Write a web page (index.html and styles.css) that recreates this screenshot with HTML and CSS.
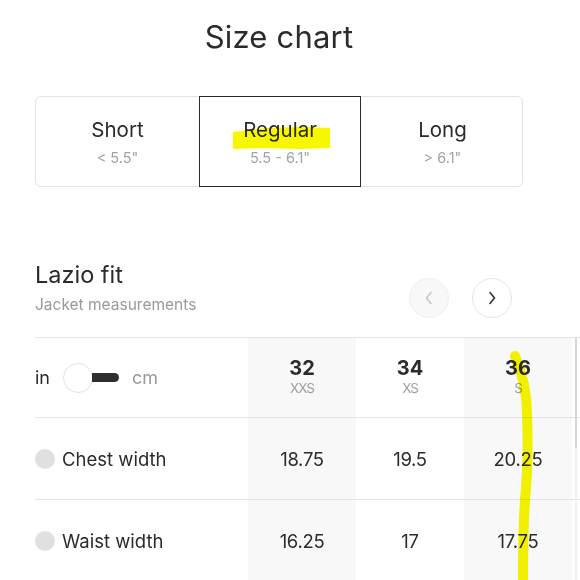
FILE: index.html
```html
<!DOCTYPE html>
<html>
<head>
<meta charset="utf-8">
<link rel="stylesheet" href="styles.css">
</head>
<body>
<main class="page">
  <h1 class="title">Size chart</h1>

  <div class="segments">
    <button class="segment"><span class="seg-label">Short</span><span class="seg-sub">&lt; 5.5"</span></button>
    <button class="segment is-active"><span class="seg-label">Regular</span><span class="seg-sub">5.5 - 6.1"</span></button>
    <button class="segment"><span class="seg-label">Long</span><span class="seg-sub">&gt; 6.1"</span></button>
  </div>

  <section class="fit-head">
    <div class="fit-text">
      <h2 class="fit-title">Lazio fit</h2>
      <p class="fit-sub">Jacket measurements</p>
    </div>
    <div class="nav">
      <button class="nav-btn is-disabled" aria-label="Previous">
        <svg width="10" height="14" viewBox="0 0 10 14"><polyline points="7,1.5 2.5,7 7,12.5" fill="none" stroke="currentColor" stroke-width="1.6" stroke-linecap="round" stroke-linejoin="round"/></svg>
      </button>
      <button class="nav-btn" aria-label="Next">
        <svg width="10" height="14" viewBox="0 0 10 14"><polyline points="3,1.5 7.5,7 3,12.5" fill="none" stroke="currentColor" stroke-width="1.6" stroke-linecap="round" stroke-linejoin="round"/></svg>
      </button>
    </div>
  </section>

  <div class="table-wrap">
    <div class="table">
      <div class="row head-row">
        <div class="cell label-cell">
          <span class="unit on">in</span>
          <span class="toggle"><span class="knob"></span><span class="bar"></span></span>
          <span class="unit off">cm</span>
        </div>
        <div class="cell size shade"><span class="size-num">32</span><span class="size-code">XXS</span></div>
        <div class="cell size"><span class="size-num">34</span><span class="size-code">XS</span></div>
        <div class="cell size shade"><span class="size-num">36</span><span class="size-code">S</span></div>
        <div class="cell size"></div>
      </div>
      <div class="row">
        <div class="cell label-cell"><span class="dot"></span><span class="measure">Chest width</span></div>
        <div class="cell val shade">18.75</div>
        <div class="cell val">19.5</div>
        <div class="cell val shade">20.25</div>
        <div class="cell val"></div>
      </div>
      <div class="row">
        <div class="cell label-cell"><span class="dot"></span><span class="measure">Waist width</span></div>
        <div class="cell val shade">16.25</div>
        <div class="cell val">17</div>
        <div class="cell val shade">17.75</div>
        <div class="cell val"></div>
      </div>
    </div>
    <div class="scrollbar"><span class="thumb"></span></div>
  </div>

  <svg class="annot" width="580" height="580" viewBox="0 0 580 580">
    <path d="M233,132 L268,128 L300,127 L330,128 L330,148 L300,149 L265,148 L233,149 Z" fill="#f7f700"/>
    <path d="M515,356 C522,372 527,392 527,415 C528,440 528,470 525,500 C523,530 523,555 523,585" fill="none" stroke="#f7f700" stroke-width="10" stroke-linecap="round"/>
  </svg>
</main>
</body>
</html>
```

FILE: styles.css
```css
* { box-sizing: border-box; }
html, body { margin: 0; padding: 0; background: #fff; }
body {
  font-family: Inter, "Liberation Sans", Arial, sans-serif;
  color: #2b2b2b;
  width: 580px;
  height: 580px;
  overflow: hidden;
}
.page {
  position: relative;
  padding: 17px 0 0 35px;
}
.title {
  margin: 0;
  width: 488px;
  text-align: center;
  font-size: 31px;
  font-weight: 400;
  line-height: 40px;
  color: #2b2b2b;
  letter-spacing: 0.2px;
}
.segments {
  margin-top: 39px;
  width: 488px;
  height: 91px;
  display: grid;
  grid-template-columns: 163px 162px 163px;
  border: 1px solid #e3e3e3;
  border-radius: 6px;
}
.segment {
  font-family: inherit;
  background: transparent;
  border: 0;
  padding: 0;
  margin: 0;
  display: flex;
  flex-direction: column;
  align-items: center;
  justify-content: center;
  gap: 6px;
  cursor: pointer;
}
.segment.is-active {
  margin: -1px 0;
  border: 1.5px solid #2b2b2b;
  border-radius: 0;
}
.seg-label {
  font-size: 20.5px;
  line-height: 26px;
  color: #2b2b2b;
}
.seg-sub {
  font-size: 14.5px;
  line-height: 18px;
  color: #a3a3a3;
}
.fit-head {
  margin-top: 74px;
  width: 488px;
  display: flex;
  justify-content: space-between;
  align-items: flex-end;
  padding-right: 11px;
}
.fit-title {
  margin: 0;
  font-size: 23.5px;
  font-weight: 400;
  line-height: 28px;
  color: #2b2b2b;
}
.fit-sub {
  margin: 6px 0 0;
  font-size: 15.5px;
  line-height: 20px;
  color: #9a9a9a;
  padding-bottom: 3px;
}
.nav {
  display: flex;
  gap: 23px;
}
.nav-btn {
  width: 40px;
  height: 40px;
  border-radius: 50%;
  border: 1px solid #e6e6e6;
  background: #fff;
  color: #333;
  display: flex;
  align-items: center;
  justify-content: center;
  padding: 0;
}
.nav-btn.is-disabled {
  background: #f8f8f8;
  border-color: #f0f0f0;
  color: #c8c8c8;
}
.table-wrap {
  position: relative;
  margin-top: 19px;
  width: 545px;
  overflow: hidden;
}
.table {
  display: flex;
  flex-direction: column;
  width: 700px;
}
.row {
  display: grid;
  grid-template-columns: 213px 108px 108px 108px 108px;
  height: 82px;
  border-top: 1px solid #e4e4e4;
}
.row.head-row { height: 80px; }
.cell {
  display: flex;
  align-items: center;
  justify-content: center;
}
.shade { background: #f8f8f8; }
.label-cell { justify-content: flex-start; }
.unit { font-size: 18px; }
.unit.on { color: #2b2b2b; }
.unit.off { color: #9a9a9a; margin-left: 13px; }
.toggle {
  display: flex;
  align-items: center;
  margin-left: 13px;
}
.knob {
  width: 30px;
  height: 30px;
  border-radius: 50%;
  border: 1px solid #e2e2e2;
  background: #fff;
}
.bar {
  width: 27px;
  height: 9px;
  margin-left: -1px;
  border-radius: 0 5px 5px 0;
  background: #2e2e2e;
}
.size {
  flex-direction: column;
  gap: 2px;
  padding-bottom: 3px;
}
.size-num {
  font-size: 20px;
  font-weight: 700;
  line-height: 22px;
  color: #2b2b2b;
}
.size-code {
  font-size: 13.5px;
  line-height: 15px;
  color: #9e9e9e;
  letter-spacing: -1px;
}
.dot {
  width: 20px;
  height: 20px;
  border-radius: 50%;
  background: #e0e0e0;
  margin-right: 7px;
}
.measure {
  font-size: 18.5px;
  color: #2b2b2b;
}
.val {
  font-size: 18.5px;
  color: #2b2b2b;
  letter-spacing: -0.3px;
}
.scrollbar {
  position: absolute;
  top: 1px;
  right: 3px;
  width: 2px;
  bottom: 0;
  background: #f0f0f0;
}
.thumb {
  display: block;
  width: 2px;
  height: 110px;
  background: #d6d6d6;
}
.annot {
  position: absolute;
  top: 0;
  left: 0;
  pointer-events: none;
  mix-blend-mode: multiply;
}
```
